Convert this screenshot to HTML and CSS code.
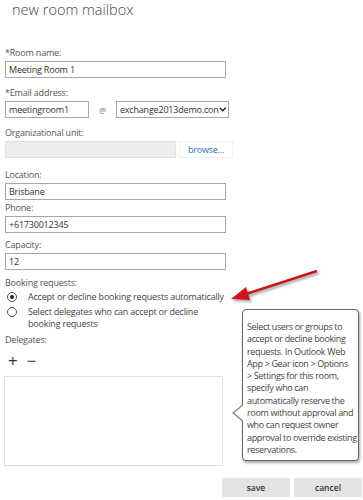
FILE: index.html
```html
<!DOCTYPE html>
<html lang="en">
<head>
    <meta charset="UTF-8">
    <meta name="viewport" content="width=device-width, initial-scale=1.0">
    <title>new room mailbox</title>
    <link rel="stylesheet" href="styles.css">
</head>
<body>
    <h1 class="title">new room mailbox</h1>

    <form class="mailbox-form">
      <div class="field first">
        <label class="field-label">*Room name:</label>
        <input class="text-input wide" type="text" value="Meeting Room 1">
      </div>

      <div class="field">
        <label class="field-label">*Email address:</label>
        <div class="email-row">
          <input class="text-input alias" type="text" value="meetingroom1">
          <span class="at">@</span>
          <div class="domain-select">
            <span>exchange2013demo.con</span>
            <svg class="chevron" width="10" height="7" viewBox="0 0 10 7"><path d="M1 1.2 L5 5.2 L9 1.2" fill="none" stroke="#222" stroke-width="1.8"/></svg>
          </div>
        </div>
      </div>

      <div class="field">
        <label class="field-label">Organizational unit:</label>
        <div class="ou-row">
          <div class="ou-box"></div>
          <a class="browse" href="#">browse...</a>
        </div>
      </div>

      <div class="field loose">
        <label class="field-label">Location:</label>
        <input class="text-input wide" type="text" value="Brisbane">
      </div>

      <div class="field tight">
        <label class="field-label">Phone:</label>
        <input class="text-input wide" type="text" value="+61730012345">
      </div>

      <div class="field snug">
        <label class="field-label">Capacity:</label>
        <input class="text-input wide" type="text" value="12">
      </div>

      <div class="field booking">
        <label class="field-label">Booking requests:</label>
        <div class="radio-row">
          <span class="radio checked"></span>
          <span>Accept or decline booking requests automatically</span>
        </div>
        <div class="radio-row">
          <span class="radio"></span>
          <span>Select delegates who can accept or decline<br>booking requests</span>
        </div>
      </div>

      <div class="field delegates">
        <label class="field-label">Delegates:</label>
        <div class="delegate-tools">
          <span class="tool">+</span>
          <span class="tool">&minus;</span>
        </div>
        <div class="delegate-list"></div>
      </div>

      <div class="actions">
        <button type="button" class="btn">save</button>
        <button type="button" class="btn">cancel</button>
      </div>
    </form>

    <div class="callout">
      Select users or groups to<br>
      accept or decline booking<br>
      requests. In Outlook Web<br>
      App &gt; Gear icon &gt; Options<br>
      &gt; Settings for this room,<br>
      specify who can<br>
      automatically reserve the<br>
      room without approval and<br>
      who can request owner<br>
      approval to override existing<br>
      reservations.
    </div>

    <svg class="red-arrow" width="100" height="50" viewBox="0 0 100 50">
      <defs>
        <filter id="sh" x="-20%" y="-40%" width="160%" height="200%">
          <feDropShadow dx="1.5" dy="2" stdDeviation="1.2" flood-color="#000" flood-opacity="0.35"/>
        </filter>
      </defs>
      <g filter="url(#sh)">
        <line x1="88" y1="3" x2="14" y2="27" stroke="#c8161b" stroke-width="2.6"/>
        <polygon points="2,31 17,19 21,32" fill="#c8161b"/>
      </g>
    </svg>
</body>
</html>
```

FILE: styles.css
```css
body {
    margin: 0;
    width: 363px;
    height: 500px;
    position: relative;
    overflow: hidden;
    background: #fff;
    font-family: "Segoe UI", "Open Sans", sans-serif;
    font-size: 9px;
    letter-spacing: -0.2px;
    color: #444;
}
.title {
    margin: 0;
    padding: 0 0 0 12px;
    height: 20px;
    line-height: 20px;
    font-size: 14.5px;
    font-weight: 300;
    letter-spacing: 0;
    color: #444;
}
.mailbox-form {
    padding: 0 5px;
}
.field {
    margin-top: 8px;
}
.field.first {
    margin-top: 26px;
}
.field.loose {
    margin-top: 10px;
}
.field.tight {
    margin-top: 1px;
}
.field.snug {
    margin-top: 5px;
}
.field.booking {
    margin-top: 6px;
}
.field.delegates {
    margin-top: 3px;
}
.field-label {
    display: block;
    line-height: 14px;
    height: 14px;
    color: #555;
}
.text-input {
    display: block;
    box-sizing: border-box;
    height: 17px;
    margin: 1px 0 0;
    padding: 0 3px;
    border: 1px solid #a8a8a8;
    font-family: inherit;
    font-size: 9px;
    letter-spacing: -0.2px;
    color: #333;
    outline: none;
}
.wide {
    width: 221px;
}
.email-row {
    display: flex;
    align-items: center;
    margin-top: 1px;
}
.email-row .text-input {
    margin: 0;
}
.alias {
    width: 84px;
}
.at {
    width: 27px;
    text-align: center;
    font-size: 8px;
    color: #777;
}
.domain-select {
    box-sizing: border-box;
    width: 113px;
    height: 17px;
    border: 1px solid #a8a8a8;
    display: flex;
    align-items: center;
    justify-content: space-between;
    padding: 0 2px 0 3px;
    color: #333;
}
.ou-row {
    display: flex;
    align-items: center;
    margin-top: 1px;
}
.ou-box {
    width: 171px;
    height: 17px;
    background: #ededed;
    border: 1px solid #e2e2e2;
    box-sizing: border-box;
}
.browse {
    box-sizing: border-box;
    width: 54px;
    height: 17px;
    margin-left: 3px;
    border: 1px solid #f0f0f0;
    line-height: 15px;
    text-align: center;
    color: #1f6fc4;
    text-decoration: none;
}
.radio-row {
    display: flex;
    align-items: flex-start;
    line-height: 12px;
    color: #444;
    margin: 1px 0 0 2px;
}
.radio {
    flex: none;
    box-sizing: border-box;
    width: 10px;
    height: 10px;
    margin: 1px 11px 0 0;
    border: 1px solid #555;
    border-radius: 50%;
    position: relative;
}
.radio.checked::after {
    content: "";
    position: absolute;
    left: 2px;
    top: 2px;
    width: 4px;
    height: 4px;
    border-radius: 50%;
    background: #222;
}
.radio-row + .radio-row {
    margin-top: 3px;
}
.delegate-tools {
    display: flex;
    gap: 9px;
    padding: 4px 0 0 3px;
    height: 25px;
    font-size: 17px;
    line-height: 20px;
    color: #333;
}
.delegate-list {
    box-sizing: border-box;
    width: 219px;
    height: 90px;
    margin-left: -1px;
    border: 1px solid #e0e0e0;
}
.actions {
    display: flex;
    justify-content: flex-end;
    gap: 4px;
    margin-top: 12px;
    margin-right: -4px;
}
.btn {
    width: 68px;
    height: 19px;
    padding: 0;
    border: none;
    background: #e4e4e4;
    font-family: inherit;
    font-size: 8.5px;
    font-weight: 600;
    color: #333;
}
.callout {
    position: absolute;
    left: 242px;
    top: 309px;
    width: 117px;
    height: 152px;
    box-sizing: border-box;
    padding: 11px 0 0 4px;
    border: 1px solid #666;
    border-radius: 4px;
    background: #fff;
    box-shadow: 1px 2px 3px rgba(0, 0, 0, 0.35);
    line-height: 12.3px;
    letter-spacing: -0.35px;
    white-space: nowrap;
    color: #444;
}
.callout::before {
    content: "";
    position: absolute;
    left: -11px;
    top: 94px;
    border: 9px solid transparent;
    border-left: 0;
    border-right: 11px solid #888;
}
.callout::after {
    content: "";
    position: absolute;
    left: -9px;
    top: 95px;
    border: 8px solid transparent;
    border-left: 0;
    border-right: 10px solid #fff;
}
.red-arrow {
    position: absolute;
    left: 229px;
    top: 268px;
}
```
